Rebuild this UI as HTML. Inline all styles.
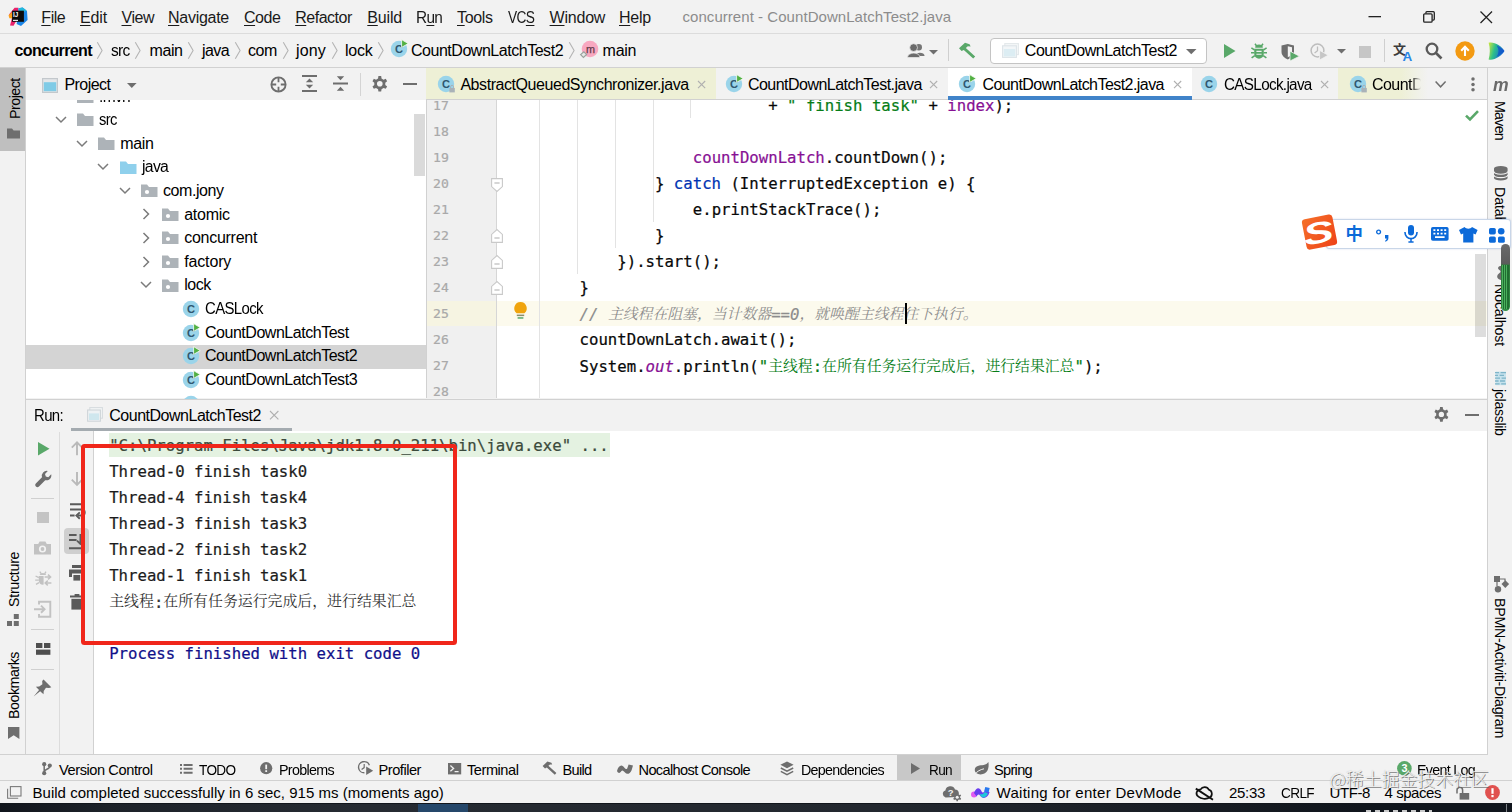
<!DOCTYPE html>
<html lang="en">
<head>
<meta charset="utf-8">
<title>concurrent - CountDownLatchTest2.java</title>
<style>
*{box-sizing:border-box;margin:0;padding:0}
html,body{width:1512px;height:812px;overflow:hidden;background:#f2f2f2}
body{position:relative;font-family:"Liberation Sans","Noto Sans CJK SC",sans-serif;font-size:16px;color:#000}
.abs{position:absolute}
.t{position:absolute;white-space:nowrap;line-height:20px;height:20px;font-size:16px}
.mono{font-family:"DejaVu Sans Mono","Liberation Mono","Noto Serif CJK SC",monospace;-webkit-text-stroke:0.22px currentColor}
.cjk{font-family:"Noto Serif CJK SC","Liberation Serif",serif}
.cjks{font-family:"Noto Sans CJK SC","Liberation Sans",sans-serif}
svg{position:absolute;overflow:visible}
u{text-decoration:underline;text-underline-offset:2px;text-decoration-thickness:1px}
#menubar{left:0;top:0;width:1512px;height:34px;background:#f2f2f2;border-bottom:1px solid #dcdcdc}
#navbar{left:0;top:34px;width:1512px;height:34px;background:#f2f2f2;border-bottom:1px solid #d1d1d1}
#leftstrip{left:0;top:68px;width:26px;height:687px;background:#f2f2f2;border-right:1px solid #d1d1d1}
#rightstrip{left:1487px;top:68px;width:25px;height:687px;background:#f2f2f2;border-left:1px solid #d1d1d1}
#projhead{left:26px;top:68px;width:400px;height:32px;background:#f2f2f2}
#projtree{left:26px;top:98px;width:400px;height:300px;background:#fff;overflow:hidden}
#tabs{left:426px;top:68px;width:1061px;height:32px;background:#f2f2f2;border-bottom:1px solid #d1d1d1;border-left:1px solid #d1d1d1;overflow:hidden}
#editor{left:426px;top:100px;width:1061px;height:298px;background:#fff;overflow:hidden;border-left:1px solid #d1d1d1}
#runhead{left:26px;top:398.5px;width:1461px;height:33.5px;background:#f2f2f2;border-top:1px solid #d1d1d1}
#runleft{left:26px;top:432px;width:68px;height:323px;background:#f2f2f2}
#console{left:93px;top:431px;width:1394px;height:324px;background:#fff;border-left:1px solid #d1d1d1;overflow:hidden}
#toolbar{left:0;top:754px;width:1512px;height:27px;background:#f2f2f2;border-top:1px solid #d1d1d1}
#status{left:0;top:780px;width:1512px;height:23px;background:#f2f2f2;border-top:1px solid #d1d1d1}
#taskbar{left:0;top:803px;width:1512px;height:9px;background:linear-gradient(90deg,#11151c 0,#1d2229 7%,#262b32 24%,#23282f 58%,#181d24 78%,#10151c 90%,#10151c 100%);border-top:1px solid #12161c}
</style>
</head>
<body>
<div class="abs" id="projtree"></div>
<div class="abs" style="left:26px;top:345px;width:400px;height:23.5px;background:#d4d4d4"></div>
<svg style="left:77px;top:89.80000000000001px" width="17" height="13" viewBox="0 0 17 13" ><path d="M0 0.5 H6 L8 3 H16.5 V13 H0 Z" fill="#adb3b8"/></svg>
<span class="t" style="left:99.0px;top:86.6px;letter-spacing:-0.70px;transform-origin:0 50%;transform:scaleX(0.973);">.mvn</span>
<svg style="left:54.6px;top:114.0px" width="12" height="12" viewBox="0 0 12 12" ><path d="M1 3 L6 8 L11 3" fill="none" stroke="#7b7b7b" stroke-width="1.5"/></svg>
<svg style="left:77.0px;top:113.4px" width="17" height="13" viewBox="0 0 17 13" ><path d="M0 0.5 H6 L8 3 H16.5 V13 H0 Z" fill="#adb3b8"/></svg>
<span class="t" style="left:99.0px;top:110.2px;letter-spacing:-0.70px;transform-origin:0 50%;transform:scaleX(0.921);">src</span>
<svg style="left:75.9px;top:137.6px" width="12" height="12" viewBox="0 0 12 12" ><path d="M1 3 L6 8 L11 3" fill="none" stroke="#7b7b7b" stroke-width="1.5"/></svg>
<svg style="left:98.3px;top:137.0px" width="17" height="13" viewBox="0 0 17 13" ><path d="M0 0.5 H6 L8 3 H16.5 V13 H0 Z" fill="#adb3b8"/></svg>
<span class="t" style="left:120.3px;top:133.8px;letter-spacing:-0.37px;">main</span>
<svg style="left:97.2px;top:161.2px" width="12" height="12" viewBox="0 0 12 12" ><path d="M1 3 L6 8 L11 3" fill="none" stroke="#7b7b7b" stroke-width="1.5"/></svg>
<svg style="left:119.6px;top:160.6px" width="17" height="13" viewBox="0 0 17 13" ><path d="M0 0.5 H6 L8 3 H16.5 V13 H0 Z" fill="#8fd0ec"/></svg>
<span class="t" style="left:141.6px;top:157.4px;letter-spacing:-0.70px;transform-origin:0 50%;transform:scaleX(0.986);">java</span>
<svg style="left:118.5px;top:184.8px" width="12" height="12" viewBox="0 0 12 12" ><path d="M1 3 L6 8 L11 3" fill="none" stroke="#7b7b7b" stroke-width="1.5"/></svg>
<svg style="left:140.9px;top:184.20000000000002px" width="17" height="13" viewBox="0 0 17 13" ><path d="M0 0.5 H6 L8 3 H16.5 V13 H0 Z" fill="#adb3b8"/><circle cx="6" cy="8" r="2.1" fill="#fff"/></svg>
<span class="t" style="left:162.9px;top:181.0px;letter-spacing:-0.40px;">com.jony</span>
<svg style="left:139.8px;top:208.4px" width="12" height="12" viewBox="0 0 12 12" ><path d="M3.5 1 L8.5 6 L3.5 11" fill="none" stroke="#7b7b7b" stroke-width="1.5"/></svg>
<svg style="left:162.2px;top:207.8px" width="17" height="13" viewBox="0 0 17 13" ><path d="M0 0.5 H6 L8 3 H16.5 V13 H0 Z" fill="#adb3b8"/><circle cx="6" cy="8" r="2.1" fill="#fff"/></svg>
<span class="t" style="left:184.2px;top:204.6px;letter-spacing:-0.24px;">atomic</span>
<svg style="left:139.8px;top:232.0px" width="12" height="12" viewBox="0 0 12 12" ><path d="M3.5 1 L8.5 6 L3.5 11" fill="none" stroke="#7b7b7b" stroke-width="1.5"/></svg>
<svg style="left:162.2px;top:231.4px" width="17" height="13" viewBox="0 0 17 13" ><path d="M0 0.5 H6 L8 3 H16.5 V13 H0 Z" fill="#adb3b8"/><circle cx="6" cy="8" r="2.1" fill="#fff"/></svg>
<span class="t" style="left:184.2px;top:228.2px;letter-spacing:-0.27px;">concurrent</span>
<svg style="left:139.8px;top:255.60000000000002px" width="12" height="12" viewBox="0 0 12 12" ><path d="M3.5 1 L8.5 6 L3.5 11" fill="none" stroke="#7b7b7b" stroke-width="1.5"/></svg>
<svg style="left:162.2px;top:255.00000000000003px" width="17" height="13" viewBox="0 0 17 13" ><path d="M0 0.5 H6 L8 3 H16.5 V13 H0 Z" fill="#adb3b8"/><circle cx="6" cy="8" r="2.1" fill="#fff"/></svg>
<span class="t" style="left:184.2px;top:251.8px;letter-spacing:-0.15px;">factory</span>
<svg style="left:139.8px;top:279.20000000000005px" width="12" height="12" viewBox="0 0 12 12" ><path d="M1 3 L6 8 L11 3" fill="none" stroke="#7b7b7b" stroke-width="1.5"/></svg>
<svg style="left:162.2px;top:278.6px" width="17" height="13" viewBox="0 0 17 13" ><path d="M0 0.5 H6 L8 3 H16.5 V13 H0 Z" fill="#adb3b8"/><circle cx="6" cy="8" r="2.1" fill="#fff"/></svg>
<span class="t" style="left:184.2px;top:275.4px;letter-spacing:-0.44px;">lock</span>
<svg style="left:181.3px;top:299.2px" width="20" height="20" viewBox="0 0 20 20" ><circle cx="10" cy="10" r="8.2" fill="#9ad4ea"/><text x="10" y="14" text-anchor="middle" font-family="Liberation Sans,sans-serif" font-size="11.2" font-weight="bold" fill="#2f5871">C</text></svg>
<span class="t" style="left:205.0px;top:299.0px;letter-spacing:-0.70px;transform-origin:0 50%;transform:scaleX(0.935);">CASLock</span>
<svg style="left:181.3px;top:322.79999999999995px" width="20" height="20" viewBox="0 0 20 20" ><circle cx="10" cy="10" r="8.2" fill="#9ad4ea"/><text x="10" y="14" text-anchor="middle" font-family="Liberation Sans,sans-serif" font-size="11.2" font-weight="bold" fill="#2f5871">C</text><path d="M12.6 0.6 L19.2 4.6 L12.6 8.4 Z" fill="#52b043" stroke="#fff" stroke-opacity="0.85" stroke-width="0.9"/></svg>
<span class="t" style="left:205.0px;top:322.6px;letter-spacing:-0.47px;">CountDownLatchTest</span>
<svg style="left:181.3px;top:346.4px" width="20" height="20" viewBox="0 0 20 20" ><circle cx="10" cy="10" r="8.2" fill="#9ad4ea"/><text x="10" y="14" text-anchor="middle" font-family="Liberation Sans,sans-serif" font-size="11.2" font-weight="bold" fill="#2f5871">C</text><path d="M12.6 0.6 L19.2 4.6 L12.6 8.4 Z" fill="#52b043" stroke="#fff" stroke-opacity="0.85" stroke-width="0.9"/></svg>
<span class="t" style="left:205.0px;top:346.2px;letter-spacing:-0.47px;">CountDownLatchTest2</span>
<svg style="left:181.3px;top:370.0px" width="20" height="20" viewBox="0 0 20 20" ><circle cx="10" cy="10" r="8.2" fill="#9ad4ea"/><text x="10" y="14" text-anchor="middle" font-family="Liberation Sans,sans-serif" font-size="11.2" font-weight="bold" fill="#2f5871">C</text><path d="M12.6 0.6 L19.2 4.6 L12.6 8.4 Z" fill="#52b043" stroke="#fff" stroke-opacity="0.85" stroke-width="0.9"/></svg>
<span class="t" style="left:205.0px;top:369.8px;letter-spacing:-0.47px;">CountDownLatchTest3</span>
<svg style="left:181.3px;top:393.6px" width="20" height="20" viewBox="0 0 20 20" ><circle cx="10" cy="10" r="8.2" fill="#9ad4ea"/><text x="10" y="14" text-anchor="middle" font-family="Liberation Sans,sans-serif" font-size="11.2" font-weight="bold" fill="#2f5871">C</text></svg>
<div class="abs" style="left:414px;top:114px;width:11px;height:62px;background:#dadada"></div>
<div class="abs" id="editor"></div>
<div class="abs" style="left:427px;top:100px;width:69.5px;height:298px;background:#f0f0f0"></div>
<div class="abs" style="left:427px;top:300.5px;width:1060px;height:25px;background:#fcfaed"></div>
<div class="abs" style="left:427px;top:300.5px;width:69.5px;height:25px;background:#f6f4e2"></div>
<div class="abs" style="left:496px;top:100px;width:1px;height:298px;background:#d6d6d6"></div>
<div class="abs" style="left:539px;top:100px;width:1px;height:298px;background:#e3e3e3"></div>
<div class="abs" style="left:577px;top:100px;width:1px;height:174px;background:#e3e3e3"></div>
<div class="abs" style="left:615px;top:100px;width:1px;height:148px;background:#e3e3e3"></div>
<div class="abs" style="left:652.5px;top:100px;width:1px;height:122px;background:#e3e3e3"></div>
<div class="abs" style="left:690px;top:100px;width:1px;height:18px;background:#e3e3e3"></div>
<span class="t mono" style="left:433.0px;top:96.3px;font-size:13.1px;color:#a9a9a9;">17</span>
<span class="t mono" style="left:433.0px;top:122.3px;font-size:13.1px;color:#a9a9a9;">18</span>
<span class="t mono" style="left:433.0px;top:148.3px;font-size:13.1px;color:#a9a9a9;">19</span>
<span class="t mono" style="left:433.0px;top:174.3px;font-size:13.1px;color:#a9a9a9;">20</span>
<span class="t mono" style="left:433.0px;top:200.3px;font-size:13.1px;color:#a9a9a9;">21</span>
<span class="t mono" style="left:433.0px;top:226.3px;font-size:13.1px;color:#a9a9a9;">22</span>
<span class="t mono" style="left:433.0px;top:252.3px;font-size:13.1px;color:#a9a9a9;">23</span>
<span class="t mono" style="left:433.0px;top:278.3px;font-size:13.1px;color:#a9a9a9;">24</span>
<span class="t mono" style="left:433.0px;top:304.3px;font-size:13.1px;color:#a9a9a9;">25</span>
<span class="t mono" style="left:433.0px;top:330.3px;font-size:13.1px;color:#a9a9a9;">26</span>
<span class="t mono" style="left:433.0px;top:356.3px;font-size:13.1px;color:#a9a9a9;">27</span>
<span class="t mono" style="left:433.0px;top:382.3px;font-size:13.1px;color:#a9a9a9;">28</span>
<svg style="left:491px;top:178.4px" width="12" height="14" viewBox="0 0 12 14" ><path d="M0.6 0.6 H11.4 V8.6 L6 13.4 L0.6 8.6 Z" fill="#fff" stroke="#c9c9c9" stroke-width="1.1"/><path d="M3.4 5 H8.6" stroke="#b5b5b5" stroke-width="1.1"/></svg>
<svg style="left:491px;top:228.60000000000002px" width="12" height="14" viewBox="0 0 12 14" ><path d="M0.6 13.4 H11.4 V5.4 L6 0.6 L0.6 5.4 Z" fill="#fff" stroke="#c9c9c9" stroke-width="1.1"/><path d="M3.4 9 H8.6" stroke="#b5b5b5" stroke-width="1.1"/></svg>
<svg style="left:491px;top:254.60000000000002px" width="12" height="14" viewBox="0 0 12 14" ><path d="M0.6 13.4 H11.4 V5.4 L6 0.6 L0.6 5.4 Z" fill="#fff" stroke="#c9c9c9" stroke-width="1.1"/><path d="M3.4 9 H8.6" stroke="#b5b5b5" stroke-width="1.1"/></svg>
<svg style="left:491px;top:280.6px" width="12" height="14" viewBox="0 0 12 14" ><path d="M0.6 13.4 H11.4 V5.4 L6 0.6 L0.6 5.4 Z" fill="#fff" stroke="#c9c9c9" stroke-width="1.1"/><path d="M3.4 9 H8.6" stroke="#b5b5b5" stroke-width="1.1"/></svg>
<svg style="left:513.5px;top:301.5px" width="13" height="17" viewBox="0 0 13 17" ><path d="M6.5 0 A6.3 6.3 0 0 1 10.4 11.2 H2.6 A6.3 6.3 0 0 1 6.5 0 Z" fill="#f0a40e"/><rect x="2.8" y="12.6" width="7.4" height="1.5" fill="#8d8d6a"/><rect x="3.6" y="15.2" width="5.8" height="1.5" fill="#59a869"/></svg>
<span class="t mono" style="left:768.2px;top:95.9px;font-size:15.66px;color:#080808;">+ <span style="color:#067d17">" finish task"</span> + <span style="color:#871094">index</span>);</span>
<span class="t mono" style="left:692.8px;top:147.9px;font-size:15.66px;color:#080808;"><span style="color:#871094">countDownLatch</span>.countDown();</span>
<span class="t mono" style="left:655.0px;top:173.9px;font-size:15.66px;color:#080808;">} <span style="color:#0033b3">catch</span> (InterruptedException e) {</span>
<span class="t mono" style="left:692.8px;top:199.9px;font-size:15.66px;color:#080808;">e.printStackTrace();</span>
<span class="t mono" style="left:655.0px;top:225.9px;font-size:15.66px;color:#080808;">}</span>
<span class="t mono" style="left:617.3px;top:251.9px;font-size:15.66px;color:#080808;">}).start();</span>
<span class="t mono" style="left:579.6px;top:277.9px;font-size:15.66px;color:#080808;">}</span>
<span class="t mono" style="left:579.6px;top:303.9px;font-size:15.66px;color:#080808;"><span style="color:#8c8c8c;font-style:italic">// <span style="font-family:'Noto Serif CJK SC',serif;font-size:14.85px;-webkit-text-stroke:0;position:relative;top:-1px">主线程在阻塞，当计数器</span>==0<span style="font-family:'Noto Serif CJK SC',serif;font-size:14.85px;-webkit-text-stroke:0;position:relative;top:-1px">，就唤醒主线程往下执行。</span></span></span>
<span class="t mono" style="left:579.6px;top:329.9px;font-size:15.66px;color:#080808;">countDownLatch.await();</span>
<span class="t mono" style="left:579.6px;top:355.9px;font-size:15.66px;color:#080808;">System.<span style="color:#871094;font-style:italic">out</span>.println(<span style="color:#067d17">"<span style="font-family:'Noto Serif CJK SC',serif;font-size:14.85px;-webkit-text-stroke:0;position:relative;top:-1px">主线程</span>:<span style="font-family:'Noto Serif CJK SC',serif;font-size:14.85px;-webkit-text-stroke:0;position:relative;top:-1px">在所有任务运行完成后，进行结果汇总</span>"</span>);</span>
<div class="abs" style="left:904.5px;top:303px;width:2px;height:20.5px;background:#000"></div>
<svg style="left:1465px;top:110px" width="14" height="11" viewBox="0 0 14 11" ><path d="M1 5.6 L5 9.4 L13 1.2" fill="none" stroke="#59a869" stroke-width="2.6"/></svg>
<div class="abs" style="left:1475.3px;top:253.5px;width:10.6px;height:83px;background:rgba(0,0,0,0.135)"></div>
<div class="abs" id="menubar"></div>
<div class="abs" id="navbar"></div>
<svg style="left:7px;top:5px" width="22" height="22" viewBox="0 0 22 22" ><path d="M2 9.6 L7.6 2.8 L11.4 2.8 L11.4 12 L6.6 20.8 L3 20.4 L5 13 Z" fill="#e8226b"/><path d="M1.5 10.2 L5.6 6.4 L6 13.6 L2.4 13.2 Z" fill="#fba01c"/><path d="M11.6 3.2 L15.6 2.6 L20 6 L20.6 15 L14 21 L9.6 19 L11 12 Z" fill="#1b86e8"/><path d="M11.6 3.2 L15.6 2.6 L19.6 5.6 L17 7 L12 6 Z" fill="#22b8dc"/><rect x="5.1" y="5.7" width="11.8" height="11.1" fill="#0c0c0c"/><text x="6" y="11.6" font-family="Liberation Sans,sans-serif" font-weight="bold" font-size="6.3" fill="#fff">IJ</text><rect x="6" y="14.8" width="5" height="1.1" fill="#fff"/></svg>
<span class="t" style="left:41.3px;top:7.5px;color:#1a1a1a;letter-spacing:-0.45px;"><u>F</u>ile</span>
<span class="t" style="left:80.0px;top:7.5px;color:#1a1a1a;letter-spacing:-0.14px;"><u>E</u>dit</span>
<span class="t" style="left:121.5px;top:7.5px;color:#1a1a1a;letter-spacing:-0.43px;"><u>V</u>iew</span>
<span class="t" style="left:168.0px;top:7.5px;color:#1a1a1a;letter-spacing:-0.27px;"><u>N</u>avigate</span>
<span class="t" style="left:244.0px;top:7.5px;color:#1a1a1a;letter-spacing:-0.47px;"><u>C</u>ode</span>
<span class="t" style="left:295.2px;top:7.5px;color:#1a1a1a;letter-spacing:-0.49px;"><u>R</u>efactor</span>
<span class="t" style="left:367.3px;top:7.5px;color:#1a1a1a;letter-spacing:-0.18px;"><u>B</u>uild</span>
<span class="t" style="left:416.3px;top:7.5px;color:#1a1a1a;letter-spacing:-0.70px;transform-origin:0 50%;transform:scaleX(0.961);">R<u>u</u>n</span>
<span class="t" style="left:457.0px;top:7.5px;color:#1a1a1a;letter-spacing:-0.33px;"><u>T</u>ools</span>
<span class="t" style="left:508.3px;top:7.5px;color:#1a1a1a;letter-spacing:-0.70px;transform-origin:0 50%;transform:scaleX(0.857);">VC<u>S</u></span>
<span class="t" style="left:549.6px;top:7.5px;color:#1a1a1a;letter-spacing:-0.22px;"><u>W</u>indow</span>
<span class="t" style="left:619.0px;top:7.5px;color:#1a1a1a;letter-spacing:-0.28px;"><u>H</u>elp</span>
<span class="t" style="left:682.5px;top:6.6px;font-size:15px;color:#8c8c8c;letter-spacing:0.05px;">concurrent - CountDownLatchTest2.java</span>
<svg style="left:1368px;top:16px" width="14" height="2" viewBox="0 0 14 2" ><rect x="0.5" y="0" width="12.5" height="1.3" fill="#222"/></svg>
<svg style="left:1423.4px;top:10.6px" width="12" height="12" viewBox="0 0 12 12" ><rect x="0.7" y="2.8" width="8.4" height="8.4" rx="1" fill="none" stroke="#222" stroke-width="1.3"/><path d="M2.9 2.6 V1.7 A1 1 0 0 1 3.9 0.7 H10.3 A1 1 0 0 1 11.3 1.7 V8.1 A1 1 0 0 1 10.3 9.1 H9.3" fill="none" stroke="#222" stroke-width="1.3"/></svg>
<svg style="left:1479.5px;top:10.5px" width="12.5" height="12.5" viewBox="0 0 12.5 12.5" ><path d="M0.5 0.5 L12 12 M12 0.5 L0.5 12" stroke="#222" stroke-width="1.3" fill="none"/></svg>
<span class="t" style="left:14.5px;top:40.5px;font-weight:bold;letter-spacing:-0.61px;">concurrent</span>
<span class="t" style="left:111.0px;top:40.5px;letter-spacing:-0.70px;transform-origin:0 50%;transform:scaleX(0.967);">src</span>
<span class="t" style="left:149.5px;top:40.5px;letter-spacing:-0.42px;">main</span>
<span class="t" style="left:202.0px;top:40.5px;letter-spacing:-0.59px;">java</span>
<span class="t" style="left:248.0px;top:40.5px;letter-spacing:-0.41px;">com</span>
<span class="t" style="left:296.0px;top:40.5px;letter-spacing:0.16px;">jony</span>
<span class="t" style="left:345.0px;top:40.5px;letter-spacing:-0.24px;">lock</span>
<svg style="left:96.7px;top:41.9px" width="5.6" height="17" viewBox="0 0 5.6 17" ><path d="M0.3 0.3 L5.1 8.5 L0.3 16.7" fill="none" stroke="#b4b4b4" stroke-width="1.1"/></svg>
<svg style="left:134.5px;top:41.9px" width="5.6" height="17" viewBox="0 0 5.6 17" ><path d="M0.3 0.3 L5.1 8.5 L0.3 16.7" fill="none" stroke="#b4b4b4" stroke-width="1.1"/></svg>
<svg style="left:188.2px;top:41.9px" width="5.6" height="17" viewBox="0 0 5.6 17" ><path d="M0.3 0.3 L5.1 8.5 L0.3 16.7" fill="none" stroke="#b4b4b4" stroke-width="1.1"/></svg>
<svg style="left:234.5px;top:41.9px" width="5.6" height="17" viewBox="0 0 5.6 17" ><path d="M0.3 0.3 L5.1 8.5 L0.3 16.7" fill="none" stroke="#b4b4b4" stroke-width="1.1"/></svg>
<svg style="left:283.2px;top:41.9px" width="5.6" height="17" viewBox="0 0 5.6 17" ><path d="M0.3 0.3 L5.1 8.5 L0.3 16.7" fill="none" stroke="#b4b4b4" stroke-width="1.1"/></svg>
<svg style="left:332.2px;top:41.9px" width="5.6" height="17" viewBox="0 0 5.6 17" ><path d="M0.3 0.3 L5.1 8.5 L0.3 16.7" fill="none" stroke="#b4b4b4" stroke-width="1.1"/></svg>
<svg style="left:378.2px;top:41.9px" width="5.6" height="17" viewBox="0 0 5.6 17" ><path d="M0.3 0.3 L5.1 8.5 L0.3 16.7" fill="none" stroke="#b4b4b4" stroke-width="1.1"/></svg>
<svg style="left:569.2px;top:41.9px" width="5.6" height="17" viewBox="0 0 5.6 17" ><path d="M0.3 0.3 L5.1 8.5 L0.3 16.7" fill="none" stroke="#b4b4b4" stroke-width="1.1"/></svg>
<svg style="left:388.5px;top:39.4px" width="20" height="20" viewBox="0 0 20 20" ><circle cx="10" cy="10" r="8.2" fill="#9ad4ea"/><text x="10" y="14" text-anchor="middle" font-family="Liberation Sans,sans-serif" font-size="11.2" font-weight="bold" fill="#2f5871">C</text><path d="M12.6 0.6 L19.2 4.6 L12.6 8.4 Z" fill="#52b043" stroke="#fff" stroke-opacity="0.85" stroke-width="0.9"/></svg>
<span class="t" style="left:411.0px;top:40.5px;letter-spacing:-0.47px;">CountDownLatchTest2</span>
<svg style="left:578.9px;top:39.4px" width="22" height="20" viewBox="0 0 22 20" ><circle cx="11" cy="10" r="8.3" fill="#f8a8c0"/><text x="11.6" y="13.9" text-anchor="middle" font-family="Liberation Sans,sans-serif" font-size="10.8" fill="#5f3b48" stroke="#5f3b48" stroke-width="0.25">m</text><path d="M1.6 15.6 L4.8 12.8 L7.6 15.4 L4.4 18.4 Z" fill="#e6e9e7" stroke="#9aa39e" stroke-width="1.2"/></svg>
<span class="t" style="left:602.6px;top:40.5px;letter-spacing:-0.27px;">main</span>
<svg style="left:907px;top:43px" width="18" height="15" viewBox="0 0 18 15" ><circle cx="11.8" cy="4.2" r="3.2" fill="#757575"/><path d="M8 13 C9 8.6 17.4 9 17.6 13 Z" fill="#757575"/><circle cx="6.6" cy="4.6" r="3.9" fill="#6b6b6b" stroke="#f2f2f2" stroke-width="0.7"/><path d="M0.4 14.6 C0.6 8.6 12.8 8.6 13 14.6 Z" fill="#6b6b6b" stroke="#f2f2f2" stroke-width="0.7"/></svg>
<svg style="left:929px;top:49.5px" width="9" height="4.5" viewBox="0 0 9 4.5" ><path d="M0 0 H9 L4.5 4.5 Z" fill="#6e6e6e"/></svg>
<div class="abs" style="left:948px;top:39px;width:1px;height:22px;background:#cfcfcf"></div>
<svg style="left:958px;top:42px" width="18" height="17" viewBox="0 0 18 17" ><path d="M1 6.2 L7 0.8 L11.6 2.2 L12.6 4.4 L9.8 4.2 L7.8 6 L17.2 14.6 L15.2 16.6 L5.8 8 L3.6 9 Z" fill="#59a869"/></svg>
<div class="abs" style="left:990px;top:38px;width:217px;height:26px;background:#fff;border:1px solid #c4c4c4;border-radius:4px"></div>
<svg style="left:1002px;top:43px" width="17" height="15" viewBox="0 0 17 15" ><rect x="2.8" y="0.6" width="13.6" height="11" fill="#f6f8f9" stroke="#e3e8eb" stroke-width="1.1"/><rect x="0.6" y="2.8" width="13.8" height="11.6" fill="#f3f6f8" stroke="#dde4e8" stroke-width="1.1"/><rect x="1.8" y="6" width="11.4" height="7.4" fill="#dcedf3"/></svg>
<span class="t" style="left:1024.8px;top:41.3px;letter-spacing:-0.47px;">CountDownLatchTest2</span>
<svg style="left:1186px;top:48.6px" width="10.5" height="5.2" viewBox="0 0 10.5 5.2" ><path d="M0 0 H10.5 L5.25 5.2 Z" fill="#6e6e6e"/></svg>
<svg style="left:1224px;top:44px" width="12" height="14" viewBox="0 0 12 14" ><path d="M0 0 L11.5 7 L0 14 Z" fill="#59a869"/></svg>
<svg style="left:1251px;top:43px" width="16" height="16" viewBox="0 0 16 16" ><path d="M4 0.8 L5.8 3.2 M12 0.8 L10.2 3.2" stroke="#59a869" stroke-width="1.5" fill="none"/><path d="M4.2 4.8 A3.8 3.2 0 0 1 11.8 4.8 Z" fill="#59a869"/><path d="M3.2 5.8 H12.8 V10.8 A4.8 5 0 0 1 3.2 10.8 Z" fill="#59a869"/><path d="M0.4 4.8 L3.4 6.8 M15.6 4.8 L12.6 6.8 M0 9.8 H3.4 M16 9.8 H12.6 M0.6 14.8 L3.8 12.6 M15.4 14.8 L12.2 12.6" stroke="#59a869" stroke-width="1.6" fill="none"/><path d="M5.4 8.4 H10.6 M5.4 11.2 H10.6" stroke="#f2f2f2" stroke-width="1.1"/></svg>
<svg style="left:1281px;top:43.5px" width="19" height="17" viewBox="0 0 19 17" ><path d="M0.5 1.5 L6.8 0 L13 1.5 V8 C13 12 9 14.5 6.8 15.5 C4.5 14.5 0.5 12 0.5 8 Z" fill="#6e6e6e"/><path d="M6.8 2.2 L11 3.2 V8 C11 10.5 8.6 12.4 6.8 13.3 Z" fill="#f2f2f2"/><path d="M9 7.2 L18.5 12.2 L9 17 Z" fill="#59a869" stroke="#f2f2f2" stroke-width="0.8"/></svg>
<svg style="left:1310px;top:43px" width="19" height="17" viewBox="0 0 19 17" ><circle cx="7.5" cy="7.5" r="6.4" fill="none" stroke="#bdbdbd" stroke-width="1.5"/><path d="M7.5 3.6 V7.8 L4.6 10" fill="none" stroke="#bdbdbd" stroke-width="1.3"/><path d="M9.6 7.4 L18.2 12.2 L9.6 17 Z" fill="#c6c6c6" stroke="#f2f2f2" stroke-width="0.8"/></svg>
<svg style="left:1336.6px;top:49.2px" width="9" height="4.5" viewBox="0 0 9 4.5" ><path d="M0 0 H9 L4.5 4.5 Z" fill="#6e6e6e"/></svg>
<div class="abs" style="left:1359px;top:45.5px;width:12px;height:12px;background:#c6c6c6"></div>
<div class="abs" style="left:1384px;top:39px;width:1px;height:23px;background:#cfcfcf"></div>
<svg style="left:1393px;top:41px" width="22" height="22" viewBox="0 0 22 22" ><text x="0" y="13" font-family="Noto Sans CJK SC,sans-serif" font-size="13" font-weight="bold" fill="#3c3c3c">文</text><text x="9.4" y="20.2" font-family="Liberation Sans,sans-serif" font-size="13.5" font-weight="bold" fill="#2b86e6">A</text></svg>
<svg style="left:1425px;top:42px" width="18" height="18" viewBox="0 0 18 18" ><circle cx="7" cy="7" r="5.3" fill="none" stroke="#5a5a5a" stroke-width="2.3"/><path d="M11 11 L16.5 16.5" stroke="#5a5a5a" stroke-width="2.6" fill="none"/></svg>
<svg style="left:1455px;top:41px" width="20" height="20" viewBox="0 0 20 20" ><circle cx="10" cy="10" r="9.7" fill="#f39a12"/><path d="M10 15 V6.6 M6.2 9.8 L10 5.8 L13.8 9.8" fill="none" stroke="#fff" stroke-width="2.1"/></svg>
<svg style="left:1488px;top:42px" width="17" height="18" viewBox="0 0 17 18" ><defs><linearGradient id="cg" x1="0" y1="0" x2="1" y2="0.3"><stop offset="0" stop-color="#d2e83a"/><stop offset="0.45" stop-color="#2cc08a"/><stop offset="1" stop-color="#1668d8"/></linearGradient></defs><path d="M0.6 0.8 C6 -0.6 13.6 4 16.4 9 C13.6 14 6 18.8 0.6 17.4 C2.2 12 2.2 6 0.6 0.8 Z" fill="url(#cg)"/><path d="M8.6 3.2 C12 5 14.6 7 16.4 9 C14.6 11.2 12 13.2 8.6 14.8 C11.2 11 11.2 7 8.6 3.2 Z" fill="#1257c8" fill-opacity=".85"/></svg>
<div class="abs" id="projhead"></div>
<div class="abs" id="leftstrip"></div>
<svg style="left:41.5px;top:77.5px" width="16" height="15" viewBox="0 0 16 15" ><rect x="0.6" y="0.6" width="14.8" height="13.8" fill="#e4e7e9" stroke="#c3c8cc" stroke-width="1.2"/><rect x="1.8" y="4.2" width="12.4" height="9" fill="#7fcbe6"/></svg>
<span class="t" style="left:64.4px;top:74.8px;letter-spacing:-0.54px;">Project</span>
<svg style="left:127px;top:83px" width="9.6" height="5" viewBox="0 0 9.6 5" ><path d="M0 0 H9.6 L4.8 5 Z" fill="#6e6e6e"/></svg>
<svg style="left:270.3px;top:75.6px" width="17" height="17" viewBox="0 0 17 17" ><circle cx="8.5" cy="8.5" r="7.1" fill="none" stroke="#6e6e6e" stroke-width="1.9"/><path d="M8.5 1.5 V6.2 M8.5 10.8 V15.5 M1.5 8.5 H6.2 M10.8 8.5 H15.5" stroke="#6e6e6e" stroke-width="1.8"/></svg>
<svg style="left:302px;top:75.4px" width="15" height="17" viewBox="0 0 15 17" ><path d="M0 1 H15 M0 16 H15" stroke="#6e6e6e" stroke-width="2"/><path d="M3.8 7.2 L7.5 3.6 L11.2 7.2 Z M3.8 9.8 L7.5 13.4 L11.2 9.8 Z" fill="#6e6e6e"/></svg>
<svg style="left:332.5px;top:75.4px" width="15" height="17" viewBox="0 0 15 17" ><path d="M0 8.5 H15" stroke="#6e6e6e" stroke-width="2"/><path d="M3.8 1.2 L7.5 5.2 L11.2 1.2 Z M3.8 15.8 L7.5 11.8 L11.2 15.8 Z" fill="#6e6e6e"/></svg>
<div class="abs" style="left:360px;top:73px;width:1px;height:23px;background:#d4d4d4"></div>
<svg style="left:371.7px;top:76.0px" width="15.6" height="15.6" viewBox="0 0 15.6 15.6" ><path d="M9.18 15.48 L6.42 15.48 L6.06 13.14 L4.04 11.97 L1.84 12.83 L0.46 10.44 L2.31 8.97 L2.31 6.63 L0.46 5.16 L1.84 2.77 L4.04 3.63 L6.06 2.46 L6.42 0.12 L9.18 0.12 L9.54 2.46 L11.56 3.63 L13.76 2.77 L15.14 5.16 L13.29 6.63 L13.29 8.97 L15.14 10.44 L13.76 12.83 L11.56 11.97 L9.54 13.14 Z" fill="#6e6e6e"/><circle cx="7.8" cy="7.8" r="2.81" fill="#f2f2f2"/></svg>
<div class="abs" style="left:403px;top:83.2px;width:14px;height:2.2px;background:#6e6e6e"></div>
<div class="abs" style="left:0;top:68px;width:25.4px;height:83px;background:#bfbfbf"></div>
<span class="t" style="left:4.6px;top:119.3px;font-size:14.2px;letter-spacing:-0.48px;transform-origin:0 0;transform:rotate(-90deg);">Project</span>
<svg style="left:7px;top:127.6px" width="13" height="10.4" viewBox="0 0 13 10.4" ><path d="M0 0.4 H5 L6.6 2.4 H13 V10.4 H0 Z" fill="#6e6e6e"/></svg>
<span class="t" style="left:4.4px;top:606.8px;font-size:14.2px;letter-spacing:-0.26px;transform-origin:0 0;transform:rotate(-90deg);">Structure</span>
<svg style="left:7px;top:613.6px" width="12" height="12" viewBox="0 0 12 12" ><rect x="6.8" y="0" width="5" height="5" fill="#6e6e6e"/><rect x="0" y="7" width="5" height="5" fill="#6e6e6e"/><rect x="6.8" y="7" width="5" height="5" fill="#6e6e6e"/></svg>
<span class="t" style="left:4.4px;top:719.2px;font-size:14.2px;letter-spacing:-0.44px;transform-origin:0 0;transform:rotate(-90deg);">Bookmarks</span>
<svg style="left:7.6px;top:727.4px" width="11.4" height="12" viewBox="0 0 11.4 12" ><path d="M0 0 H11.4 V12 L5.7 8.2 L0 12 Z" fill="#6e6e6e"/></svg>
<div class="abs" id="tabs"></div>
<div class="abs" style="left:426px;top:68px;width:289.7px;height:31px;background:#eef0d6"></div>
<div class="abs" style="left:948px;top:68px;width:244px;height:31px;background:#fff"></div>
<div class="abs" style="left:1338px;top:68px;width:90px;height:31px;background:linear-gradient(90deg,#eef0d6 0,#eef0d6 70%,#f2f2f2 100%)"></div>
<div class="abs" style="left:948px;top:96.2px;width:244px;height:4px;background:#4083c9"></div>
<svg style="left:435.9px;top:73.8px" width="20" height="20" viewBox="0 0 20 20" ><circle cx="10" cy="10" r="8.2" fill="#9ad4ea"/><text x="10" y="14" text-anchor="middle" font-family="Liberation Sans,sans-serif" font-size="11.2" font-weight="bold" fill="#2f5871">C</text><rect x="13.4" y="14" width="5.4" height="4.4" fill="#a9b2b8"/><path d="M14.6 14 v-1.2 a1.5 1.5 0 0 1 3 0 V14" fill="none" stroke="#a9b2b8" stroke-width="1"/></svg>
<span class="t" style="left:460.4px;top:74.8px;letter-spacing:-0.44px;">AbstractQueuedSynchronizer.java</span>
<svg style="left:698.4px;top:81.0px" width="7.2" height="7.2" viewBox="0 0 7.2 7.2" ><path d="M0 0 L7.2 7.2 M7.2 0 L0 7.2" stroke="#b0b0b0" stroke-width="1.1" fill="none"/></svg>
<svg style="left:724.1px;top:73.9px" width="20" height="20" viewBox="0 0 20 20" ><circle cx="10" cy="10" r="8.2" fill="#9ad4ea"/><text x="10" y="14" text-anchor="middle" font-family="Liberation Sans,sans-serif" font-size="11.2" font-weight="bold" fill="#2f5871">C</text><path d="M12.6 0.6 L19.2 4.6 L12.6 8.4 Z" fill="#52b043" stroke="#fff" stroke-opacity="0.85" stroke-width="0.9"/></svg>
<span class="t" style="left:747.9px;top:74.8px;letter-spacing:-0.52px;">CountDownLatchTest.java</span>
<svg style="left:930.4px;top:81.0px" width="7.2" height="7.2" viewBox="0 0 7.2 7.2" ><path d="M0 0 L7.2 7.2 M7.2 0 L0 7.2" stroke="#b0b0b0" stroke-width="1.1" fill="none"/></svg>
<svg style="left:956.8px;top:73.9px" width="20" height="20" viewBox="0 0 20 20" ><circle cx="10" cy="10" r="8.2" fill="#9ad4ea"/><text x="10" y="14" text-anchor="middle" font-family="Liberation Sans,sans-serif" font-size="11.2" font-weight="bold" fill="#2f5871">C</text><path d="M12.6 0.6 L19.2 4.6 L12.6 8.4 Z" fill="#52b043" stroke="#fff" stroke-opacity="0.85" stroke-width="0.9"/></svg>
<span class="t" style="left:982.4px;top:74.8px;letter-spacing:-0.55px;">CountDownLatchTest2.java</span>
<svg style="left:1174.0px;top:81.0px" width="7.2" height="7.2" viewBox="0 0 7.2 7.2" ><path d="M0 0 L7.2 7.2 M7.2 0 L0 7.2" stroke="#b0b0b0" stroke-width="1.1" fill="none"/></svg>
<svg style="left:1199.4px;top:73.9px" width="20" height="20" viewBox="0 0 20 20" ><circle cx="10" cy="10" r="8.2" fill="#9ad4ea"/><text x="10" y="14" text-anchor="middle" font-family="Liberation Sans,sans-serif" font-size="11.2" font-weight="bold" fill="#2f5871">C</text></svg>
<span class="t" style="left:1223.8px;top:74.8px;letter-spacing:-0.70px;transform-origin:0 50%;transform:scaleX(0.952);">CASLock.java</span>
<svg style="left:1321.4px;top:81.0px" width="7.2" height="7.2" viewBox="0 0 7.2 7.2" ><path d="M0 0 L7.2 7.2 M7.2 0 L0 7.2" stroke="#b0b0b0" stroke-width="1.1" fill="none"/></svg>
<svg style="left:1348px;top:73.9px" width="20" height="20" viewBox="0 0 20 20" ><circle cx="10" cy="10" r="8.2" fill="#9ad4ea"/><text x="10" y="14" text-anchor="middle" font-family="Liberation Sans,sans-serif" font-size="11.2" font-weight="bold" fill="#2f5871">C</text><rect x="13.4" y="14" width="5.4" height="4.4" fill="#a9b2b8"/><path d="M14.6 14 v-1.2 a1.5 1.5 0 0 1 3 0 V14" fill="none" stroke="#a9b2b8" stroke-width="1"/></svg>
<span class="t" style="left:1372.0px;top:74.8px;letter-spacing:-0.55px;width:48.5px;overflow:hidden;-webkit-mask-image:linear-gradient(90deg,#000 78%,transparent 100%);">CountDownLatchTest3.java</span>
<svg style="left:1434.8px;top:81px" width="11.2" height="7" viewBox="0 0 11.2 7" ><path d="M0.6 0.6 L5.6 5.8 L10.6 0.6" fill="none" stroke="#6e6e6e" stroke-width="1.5"/></svg>
<svg style="left:1471.3px;top:77px" width="4" height="15" viewBox="0 0 4 15" ><circle cx="2" cy="2" r="1.75" fill="#6e6e6e"/><circle cx="2" cy="7.4" r="1.75" fill="#6e6e6e"/><circle cx="2" cy="12.8" r="1.75" fill="#6e6e6e"/></svg>
<div class="abs" id="runhead"></div>
<div class="abs" id="runleft"></div>
<div class="abs" id="console"></div>
<span class="t" style="left:33.6px;top:405.7px;letter-spacing:-0.70px;transform-origin:0 50%;transform:scaleX(0.936);">Run:</span>
<svg style="left:86.5px;top:407.3px" width="16" height="15" viewBox="0 0 16 15" ><rect x="2.8" y="0.6" width="12.6" height="10.6" fill="#f4f6f7" stroke="#d7dcdf" stroke-width="1.1"/><rect x="0.6" y="3" width="12.8" height="11.2" fill="#eef2f4" stroke="#cfd5d9" stroke-width="1.1"/><rect x="2" y="6.4" width="10" height="6.6" fill="#cfe7ee"/></svg>
<span class="t" style="left:109.3px;top:405.7px;letter-spacing:-0.49px;">CountDownLatchTest2</span>
<svg style="left:270.1px;top:410.8px" width="8.4" height="8.4" viewBox="0 0 8.4 8.4" ><path d="M0 0 L8.4 8.4 M8.4 0 L0 8.4" stroke="#b0b0b0" stroke-width="1.1" fill="none"/></svg>
<div class="abs" style="left:71px;top:428px;width:220.5px;height:2.8px;background:#a4abb0"></div>
<svg style="left:1433.6999999999998px;top:407.40000000000003px" width="14.8" height="14.8" viewBox="0 0 14.8 14.8" ><path d="M8.71 14.68 L6.09 14.68 L5.75 12.47 L3.83 11.36 L1.75 12.18 L0.44 9.91 L2.19 8.51 L2.19 6.29 L0.44 4.89 L1.75 2.62 L3.83 3.44 L5.75 2.33 L6.09 0.12 L8.71 0.12 L9.05 2.33 L10.97 3.44 L13.05 2.62 L14.36 4.89 L12.61 6.29 L12.61 8.51 L14.36 9.91 L13.05 12.18 L10.97 11.36 L9.05 12.47 Z" fill="#6e6e6e"/><circle cx="7.4" cy="7.4" r="2.66" fill="#f2f2f2"/></svg>
<div class="abs" style="left:1464.8px;top:413.8px;width:14.2px;height:2.1px;background:#6e6e6e"></div>
<div class="abs" style="left:59px;top:432px;width:1px;height:322px;background:#dcdcdc"></div>
<svg style="left:38px;top:441.5px" width="12" height="13.5" viewBox="0 0 12 13.5" ><path d="M0 0 L11.5 6.7 L0 13.4 Z" fill="#59a869"/></svg>
<svg style="left:34.5px;top:471px" width="17" height="16" viewBox="0 0 17 16" ><path d="M16.2 3.2 A4.9 4.9 0 0 1 10.2 9.2 L4 15.4 A2.1 2.1 0 0 1 0.8 12.4 L7 6.2 A4.9 4.9 0 0 1 12.8 0 L10 2.9 L10.8 5.5 L13.3 6.2 Z" fill="#6e6e6e"/></svg>
<div class="abs" style="left:31px;top:498px;width:23px;height:1px;background:#d0d0d0"></div>
<div class="abs" style="left:37px;top:511.6px;width:11.6px;height:11.6px;background:#c4c4c4"></div>
<svg style="left:34.2px;top:541.4px" width="17" height="14" viewBox="0 0 17 14" ><path d="M0 3 H4.2 L5.6 0.6 H11.4 L12.8 3 H17 V13.6 H0 Z" fill="#c2c2c2"/><circle cx="8.5" cy="8" r="3.6" fill="#f2f2f2"/><circle cx="8.5" cy="8" r="1.9" fill="#c2c2c2"/></svg>
<svg style="left:34.5px;top:571px" width="17" height="16" viewBox="0 0 17 16" ><path d="M4.8 0.6 L6.4 2.8 M11 0.6 L9.6 2.8" stroke="#c2c2c2" stroke-width="1.3"/><path d="M4.6 4 A3.4 2.6 0 0 1 11.2 4 Z" fill="#c2c2c2"/><path d="M3.8 5 H8.6 V13.6 A4.4 4.4 0 0 1 3.8 10 Z" fill="#c2c2c2"/><path d="M0.6 5 L3.8 6.6 M0.2 9.2 H3.8 M1 13.4 L4 11.6" stroke="#c2c2c2" stroke-width="1.3"/><path d="M9.6 6 H15.2 M13 3.6 L15.6 6 L13 8.4 M16.4 12 H10.6 M12.8 9.6 L10.2 12 L12.8 14.4" fill="none" stroke="#c2c2c2" stroke-width="1.5"/></svg>
<svg style="left:34.2px;top:601.4px" width="17" height="16.4" viewBox="0 0 17 16.4" ><path d="M5 3.4 V0.7 H16.3 V15.7 H5 V13" fill="none" stroke="#c2c2c2" stroke-width="1.9"/><path d="M0 8.2 H10.4 M7 4.6 L10.6 8.2 L7 11.8" fill="none" stroke="#c2c2c2" stroke-width="1.9"/></svg>
<div class="abs" style="left:31px;top:628.5px;width:23px;height:1px;background:#d0d0d0"></div>
<svg style="left:35.5px;top:643px" width="14.4" height="11.8" viewBox="0 0 14.4 11.8" ><rect x="0" y="0" width="6.4" height="5" fill="#4f4f4f"/><rect x="8" y="0" width="6.4" height="5" fill="#4f4f4f"/><rect x="0" y="6.6" width="14.4" height="5.2" fill="#4f4f4f"/></svg>
<div class="abs" style="left:31px;top:668.5px;width:23px;height:1px;background:#d0d0d0"></div>
<svg style="left:33.4px;top:679.4px" width="19" height="18" viewBox="0 0 17 16" ><path d="M9.4 0.4 L16.4 7.4 L14.4 8 L11.6 7.8 L9.6 10.6 L9.4 13.6 L6.4 10.8 L0.6 15.6 L5.4 9.8 L2.6 6.8 L5.6 6.6 L8.4 4.6 L8.2 1.8 Z" fill="#6e6e6e"/></svg>
<svg style="left:70.5px;top:441.2px" width="12" height="14.2" viewBox="0 0 12 14.2" ><path d="M6 14.2 V1.4 M0.8 6.6 L6 1.3 L11.2 6.6" fill="none" stroke="#b9b9b9" stroke-width="1.9"/></svg>
<svg style="left:70.5px;top:471.8px" width="12" height="14.2" viewBox="0 0 12 14.2" ><path d="M6 0 V12.8 M0.8 7.6 L6 12.9 L11.2 7.6" fill="none" stroke="#b9b9b9" stroke-width="1.9"/></svg>
<svg style="left:69.6px;top:503px" width="15" height="16" viewBox="0 0 15 16" ><path d="M0 1.2 H15 M0 6.4 H11.6 A3 3 0 0 1 11.6 12.6 H8 M0 12.6 H4.6" fill="none" stroke="#5a5a5a" stroke-width="2"/><path d="M9.8 9.4 L6.4 12.6 L9.8 15.8" fill="none" stroke="#5a5a5a" stroke-width="1.9"/></svg>
<div class="abs" style="left:64px;top:528px;width:25.4px;height:26px;background:#cfcfcf;border-radius:4px"></div>
<svg style="left:69.4px;top:533.6px" width="15" height="15" viewBox="0 0 15 15" ><path d="M0 1 H7.6 M0 6 H7.6 M0 14.2 H15" fill="none" stroke="#5a5a5a" stroke-width="2"/><path d="M11.4 0 V9.6 M8 6.6 L11.4 10 L14.8 6.6" fill="none" stroke="#5a5a5a" stroke-width="1.8"/></svg>
<svg style="left:69px;top:564.6px" width="15.6" height="15.6" viewBox="0 0 15.6 15.6" ><rect x="3" y="0" width="9.6" height="3" fill="#5a5a5a"/><path d="M0 4.4 H15.6 V12 H12.6 V8.6 H3 V12 H0 Z" fill="#5a5a5a"/><rect x="4.4" y="10" width="6.8" height="5.6" fill="#5a5a5a"/></svg>
<svg style="left:70px;top:594.4px" width="14" height="15.6" viewBox="0 0 14 15.6" ><path d="M4.6 0 H9.4 V1.6 H14 V3.4 H0 V1.6 H4.6 Z" fill="#5a5a5a"/><path d="M1.4 4.8 H12.6 V15.6 H1.4 Z" fill="#5a5a5a"/></svg>
<div class="abs" style="left:108.5px;top:432.6px;width:501.5px;height:24.2px;background:#e4f2e1"></div>
<span class="t mono" style="left:109.2px;top:436.0px;font-size:15.66px;color:#3b4a3b;">"C:\Program Files\Java\jdk1.8.0_211\bin\java.exe" ...</span>
<span class="t mono" style="left:109.2px;top:462.0px;font-size:15.66px;color:#1c1c1c;">Thread-0 finish task0</span>
<span class="t mono" style="left:109.2px;top:488.0px;font-size:15.66px;color:#1c1c1c;">Thread-4 finish task4</span>
<span class="t mono" style="left:109.2px;top:514.0px;font-size:15.66px;color:#1c1c1c;">Thread-3 finish task3</span>
<span class="t mono" style="left:109.2px;top:540.0px;font-size:15.66px;color:#1c1c1c;">Thread-2 finish task2</span>
<span class="t mono" style="left:109.2px;top:566.0px;font-size:15.66px;color:#1c1c1c;">Thread-1 finish task1</span>
<span class="t mono" style="left:109.2px;top:592.0px;font-size:15.66px;color:#333;"><span style="font-family:'Noto Serif CJK SC',serif;font-size:14.9px;-webkit-text-stroke:0;position:relative;top:-1.8px">主线程</span>:<span style="font-family:'Noto Serif CJK SC',serif;font-size:14.9px;-webkit-text-stroke:0;position:relative;top:-1.8px">在所有任务运行完成后，进行结果汇总</span></span>
<span class="t mono" style="left:109.2px;top:644.0px;font-size:15.66px;color:#10108a;">Process finished with exit code 0</span>
<div class="abs" style="left:80.5px;top:443.9px;width:376.7px;height:200.8px;border:4.2px solid #f0261a;border-radius:3.5px"></div>
<div class="abs" id="toolbar"></div>
<div class="abs" id="status"></div>
<div class="abs" id="taskbar"></div>
<div class="abs" style="left:897px;top:755px;width:64px;height:25px;background:#c8c8c8"></div>
<svg style="left:41.5px;top:762px" width="10" height="13.4" viewBox="0 0 10 13.4" ><circle cx="2.2" cy="2.2" r="2.1" fill="#6e6e6e"/><circle cx="2.2" cy="11.2" r="2.1" fill="#6e6e6e"/><circle cx="7.8" cy="3.6" r="2.1" fill="#6e6e6e"/><path d="M2.2 2 V11 M7.8 4 C7.8 8 2.2 6.6 2.2 10" fill="none" stroke="#6e6e6e" stroke-width="1.5"/></svg>
<span class="t" style="left:59.0px;top:759.8px;font-size:14.6px;letter-spacing:-0.42px;">Version Control</span>
<svg style="left:180.4px;top:763.6px" width="12.6" height="9.6" viewBox="0 0 12.6 9.6" ><path d="M0 0.9 H2 M3.6 0.9 H12.6 M0 4.8 H2 M3.6 4.8 H12.6 M0 8.7 H2 M3.6 8.7 H12.6" stroke="#6e6e6e" stroke-width="2"/></svg>
<span class="t" style="left:198.5px;top:759.8px;font-size:14.6px;letter-spacing:-0.70px;transform-origin:0 50%;transform:scaleX(0.933);">TODO</span>
<svg style="left:260.4px;top:762px" width="12.4" height="12.4" viewBox="0 0 12.4 12.4" ><circle cx="6.2" cy="6.2" r="6.1" fill="#6e6e6e"/><rect x="5.3" y="2.6" width="1.8" height="4.6" fill="#f2f2f2"/><rect x="5.3" y="8.2" width="1.8" height="1.8" fill="#f2f2f2"/></svg>
<span class="t" style="left:279.0px;top:759.8px;font-size:14.6px;letter-spacing:-0.70px;transform-origin:0 50%;transform:scaleX(0.981);">Problems</span>
<svg style="left:357.6px;top:761.3px" width="15.2" height="14" viewBox="0 0 15.2 14" ><path d="M11.4 4.2 A5.6 5.6 0 1 0 6.4 11.8" fill="none" stroke="#6e6e6e" stroke-width="1.4"/><path d="M6.2 3 V6.6 L3.6 8.4" fill="none" stroke="#6e6e6e" stroke-width="1.2"/><path d="M8.2 5.6 L15.2 9.8 L8.2 14 Z" fill="#6e6e6e"/></svg>
<span class="t" style="left:378.5px;top:759.8px;font-size:14.6px;letter-spacing:-0.47px;">Profiler</span>
<svg style="left:447.5px;top:762.6px" width="13.2" height="11.4" viewBox="0 0 13.2 11.4" ><rect x="0" y="0" width="13.2" height="11.4" fill="#6e6e6e"/><path d="M2.4 2.6 L5.6 5.4 L2.4 8.2 M6.6 8.6 H10.6" fill="none" stroke="#f2f2f2" stroke-width="1.3"/></svg>
<span class="t" style="left:467.0px;top:759.8px;font-size:14.6px;letter-spacing:-0.46px;">Terminal</span>
<svg style="left:542px;top:761.4px" width="15" height="14" viewBox="0 0 15 14" ><path d="M0.6 5 L5.4 0.6 L9.4 1.8 L10.2 3.6 L8 3.4 L6.4 4.8 L14.4 12 L12.8 13.8 L4.8 6.6 L3 7.4 Z" fill="#6e6e6e"/></svg>
<span class="t" style="left:562.5px;top:759.8px;font-size:14.6px;letter-spacing:-0.69px;">Build</span>
<svg style="left:617px;top:763.6px" width="16" height="10.6" viewBox="0 0 16 10.6" ><path d="M0 7 C1 3 3.6 0.4 6 2.2 C7.6 3.4 8.6 6 10.2 4.4 L11.6 0.6 L16 1.6 L14.6 6.2 C13 10 10 10.8 8 8.6 C6.6 7 5.6 5.6 4.4 7 C3.4 8.6 1.6 10.4 0 7 Z" fill="#6e6e6e"/></svg>
<span class="t" style="left:638.5px;top:759.8px;font-size:14.6px;letter-spacing:-0.65px;">Nocalhost Console</span>
<svg style="left:780.2px;top:761.3px" width="14" height="14.6" viewBox="0 0 14 14.6" ><path d="M7 0.4 L13.6 3.8 L7 7.2 L0.4 3.8 Z" fill="#6e6e6e"/><path d="M0.8 7 L7 10.2 L13.2 7 M0.8 10.4 L7 13.6 L13.2 10.4" fill="none" stroke="#6e6e6e" stroke-width="1.5"/></svg>
<span class="t" style="left:801.0px;top:759.8px;font-size:14.6px;letter-spacing:-0.70px;transform-origin:0 50%;transform:scaleX(0.977);">Dependencies</span>
<svg style="left:910.8px;top:763px" width="9" height="11" viewBox="0 0 9 11" ><path d="M0 0 L9 5.5 L0 11 Z" fill="#6e6e6e"/></svg>
<span class="t" style="left:928.5px;top:759.8px;font-size:14.6px;letter-spacing:-0.70px;transform-origin:0 50%;transform:scaleX(0.932);">Run</span>
<svg style="left:973.6px;top:762px" width="14.8" height="13" viewBox="0 0 14.8 13" ><path d="M14.4 0 C15.4 6 13.6 12.4 6.6 12.4 C3 12.4 0.6 10.4 0.8 7.6 C1 3.6 6 3.4 9.6 3 C11.8 2.6 13.4 1.6 14.4 0 Z" fill="#6e6e6e"/><path d="M0.4 12.6 C3 9.4 6.2 7.6 10 6.8" fill="none" stroke="#f2f2f2" stroke-width="1"/></svg>
<span class="t" style="left:994.0px;top:759.8px;font-size:14.6px;letter-spacing:-0.70px;">Spring</span>
<svg style="left:1397px;top:761.4px" width="15" height="15" viewBox="0 0 15 15" ><circle cx="7.4" cy="7.4" r="7.3" fill="#59a869"/><text x="7.4" y="11.4" text-anchor="middle" font-family="Liberation Sans,sans-serif" font-size="10.8" font-weight="bold" fill="#fff">3</text></svg>
<span class="t" style="left:1417.0px;top:759.8px;font-size:14.6px;letter-spacing:-0.70px;transform-origin:0 50%;transform:scaleX(0.976);">Event Log</span>
<svg style="left:7px;top:786.4px" width="14.6" height="12.8" viewBox="0 0 14.6 12.8" ><rect x="3.4" y="0.6" width="10.6" height="9.4" fill="none" stroke="#7a7a7a" stroke-width="1.1"/><path d="M0.6 2.8 V12.2 H11.2" fill="none" stroke="#7a7a7a" stroke-width="1.1"/></svg>
<span class="t" style="left:32.5px;top:782.6px;font-size:15.0px;letter-spacing:0.02px;">Build completed successfully in 6 sec, 915 ms (moments ago)</span>
<svg style="left:942px;top:785px" width="19.4" height="17" viewBox="0 0 19.4 17" ><path d="M3.6 12.4 A3.5 3.5 0 0 1 3.4 5.6 A5 5 0 0 1 13 4.4 A4 4 0 0 1 14.6 12 Z" fill="#6e6e6e"/><text x="8.6" y="10.6" text-anchor="middle" font-family="Liberation Sans,sans-serif" font-size="9.5" font-weight="bold" fill="#f2f2f2">?</text></svg>
<svg style="left:952.8px;top:792.8px" width="8.4" height="8.4" viewBox="0 0 8.4 8.4" ><path d="M4.94 8.33 L3.46 8.33 L3.27 7.08 L2.18 6.45 L0.99 6.91 L0.25 5.62 L1.24 4.83 L1.24 3.57 L0.25 2.78 L0.99 1.49 L2.18 1.95 L3.27 1.32 L3.46 0.07 L4.94 0.07 L5.13 1.32 L6.22 1.95 L7.41 1.49 L8.15 2.78 L7.16 3.57 L7.16 4.83 L8.15 5.62 L7.41 6.91 L6.22 6.45 L5.13 7.08 Z" fill="#6e6e6e"/><circle cx="4.2" cy="4.2" r="1.51" fill="#f2f2f2"/></svg>
<svg style="left:971px;top:787px" width="18.6" height="12" viewBox="0 0 18.6 12" ><circle cx="3" cy="7.6" r="3" fill="#e25cf0"/><path d="M3 6 C5 0 8.6 0 10.4 4 C11.6 6.6 13 5.6 14 3.6 L18.6 5 C16.8 11.6 11.4 12.6 9 8.6 C7.8 6.6 6.6 7.6 5.6 9.4 Z" fill="#6a3df0"/><path d="M8.6 7 C10 11.6 14.6 11.6 17 6.4 L13.6 5 C12.6 7.4 10.6 7.6 8.6 7 Z" fill="#1ec8d8"/><rect x="13.6" y="0.4" width="4.6" height="4.6" fill="#2878f0" transform="rotate(14 15.9 2.7)"/></svg>
<span class="t" style="left:996.5px;top:782.6px;font-size:15.0px;letter-spacing:0.29px;">Waiting for enter DevMode</span>
<svg style="left:1194.5px;top:786px" width="19" height="15" viewBox="0 0 19 15" ><path d="M3.4 10.6 A4.6 4 0 0 1 5.6 3.4 A4.6 4.4 0 0 1 13.8 3.6 A4.2 4.4 0 0 1 14.8 11.6 C11 13.6 6 13 3.4 10.6 Z" fill="none" stroke="#111" stroke-width="1.7"/><path d="M0.8 2.6 L18 13.8" stroke="#111" stroke-width="1.9"/></svg>
<span class="t" style="left:1229.0px;top:782.6px;font-size:15.0px;letter-spacing:-0.31px;">25:33</span>
<span class="t" style="left:1280.5px;top:782.6px;font-size:15.0px;letter-spacing:-0.70px;transform-origin:0 50%;transform:scaleX(0.907);">CRLF</span>
<span class="t" style="left:1329.5px;top:782.6px;font-size:15.0px;letter-spacing:-0.40px;">UTF-8</span>
<span class="t" style="left:1384.5px;top:782.6px;font-size:15.0px;letter-spacing:-0.44px;">4 spaces</span>
<svg style="left:1456px;top:785.5px" width="14" height="14" viewBox="0 0 14 14" ><rect x="3.6" y="7" width="9.6" height="6.6" fill="#6e6e6e"/><path d="M1 7.4 V4 A2.8 2.8 0 0 1 6.6 4 V7" fill="none" stroke="#6e6e6e" stroke-width="1.5"/></svg>
<svg style="left:1484.5px;top:785.2px" width="15" height="15" viewBox="0 0 15 15" ><circle cx="7.5" cy="7.5" r="7.4" fill="#e0514f"/><rect x="6.4" y="3.2" width="2.2" height="5.6" fill="#fff"/><rect x="6.4" y="10" width="2.2" height="2.2" fill="#fff"/></svg>
<span class="t cjks" style="left:1329.5px;top:768.4px;font-size:17.8px;color:rgba(255,255,255,0.86);letter-spacing:0.11px;font-weight:300;text-shadow:1px 1px 0.6px rgba(95,95,95,0.78),0 0 1px rgba(120,120,120,.55);">@稀土掘金技术社区</span>
<div class="abs" style="left:1506px;top:804px;width:1px;height:8px;background:#7d8287"></div>
<div class="abs" style="left:418px;top:804px;width:50px;height:8px;background:#25476a"></div>
<div class="abs" style="left:1366px;top:809.6px;width:66px;height:2.4px;background:repeating-linear-gradient(90deg,#e8e8e8 0 5px,#10151c 5px 9px);opacity:.85"></div>
<div class="abs" id="rightstrip"></div>
<span class="t" style="left:1492.6px;top:74.6px;font-size:19px;color:#6a6a6a;font-weight:bold;font-style:italic;letter-spacing:-0.70px;transform-origin:0 50%;transform:scaleX(0.926);">m</span>
<span class="t" style="left:1509.5px;top:100.8px;font-size:14.2px;letter-spacing:-0.70px;transform-origin:0 0;transform:rotate(90deg) scaleX(0.998);">Maven</span>
<svg style="left:1494px;top:165.6px" width="13.6" height="14.6" viewBox="0 0 13.6 14.6" ><path d="M0 2.6 A6.8 2.6 0 0 1 13.6 2.6 V12 A6.8 2.6 0 0 1 0 12 Z" fill="#6e6e6e"/><path d="M0 5.6 A6.8 2.6 0 0 0 13.6 5.6 M0 9 A6.8 2.6 0 0 0 13.6 9" stroke="#f2f2f2" stroke-width="1.1" fill="none"/></svg>
<span class="t" style="left:1509.5px;top:187.0px;font-size:14.2px;letter-spacing:-0.09px;transform-origin:0 0;transform:rotate(90deg);">Database</span>
<svg style="left:1494px;top:266px" width="13" height="14" viewBox="0 0 13 14" ><path d="M9 0 C12 1 13 3.6 11 6 C9.6 7.6 7 8.6 8.6 10.2 L12.4 11.6 L11.4 14 L6.8 14 C3 13 2.2 10 4.4 8 C6 6.6 7.4 5.6 6 4.4 C4.4 3.4 2.6 1.6 6 0 Z" fill="#6e6e6e"/></svg>
<span class="t" style="left:1509.5px;top:284.0px;font-size:14.2px;letter-spacing:-0.12px;transform-origin:0 0;transform:rotate(90deg);">Nocalhost</span>
<svg style="left:1494px;top:370.6px" width="13" height="14.4" viewBox="0 0 13 14.4" ><rect x="1.6" y="0.6" width="10.4" height="13.6" fill="#c6e2ec"/><path d="M1 1.6 H5 M6.6 1.6 H12 M1 4.4 H4 M5.6 4.4 H10 M1 7.2 H6 M7.6 7.2 H12 M1 10 H4.6 M6 10 H11 M1 12.8 H5.6 M7.2 12.8 H12" stroke="#7fb5c9" stroke-width="1.3"/></svg>
<span class="t" style="left:1509.5px;top:389.4px;font-size:14.2px;letter-spacing:-0.34px;transform-origin:0 0;transform:rotate(90deg);">jclasslib</span>
<svg style="left:1494px;top:575.6px" width="14" height="16.6" viewBox="0 0 14 16.6" ><rect x="0" y="0" width="6" height="6" fill="#6e6e6e"/><rect x="8.6" y="5.4" width="5.4" height="5.4" fill="#6e6e6e" transform="rotate(45 11.3 8.1)"/><circle cx="4" cy="13.2" r="3.2" fill="#6e6e6e"/><path d="M3 6 V10 M6 3 H11 V5" fill="none" stroke="#6e6e6e" stroke-width="1.2"/></svg>
<span class="t" style="left:1509.5px;top:597.6px;font-size:14.2px;letter-spacing:-0.24px;transform-origin:0 0;transform:rotate(90deg);">BPMN-Activiti-Diagram</span>
<div class="abs" style="left:1326px;top:219px;width:184.5px;height:30px;background:#fff;border:1px solid #c9d6e8;border-radius:3px;box-shadow:0 0 2px rgba(120,150,200,.35)"></div>
<svg style="left:1300px;top:213px" width="39" height="38" viewBox="0 0 39 38" ><defs><linearGradient id="sg" x1="0" y1="0" x2="1" y2="1"><stop offset="0" stop-color="#f5702a"/><stop offset="1" stop-color="#ee4318"/></linearGradient></defs><g transform="rotate(-11 19.5 19)"><rect x="4" y="3.6" width="31" height="31" rx="3.4" fill="url(#sg)"/><text x="19.5" y="31" text-anchor="middle" font-family="Liberation Sans,sans-serif" font-size="33" font-weight="bold" font-style="italic" fill="#fff" transform="translate(19.5 19) scale(1.38 0.9) translate(-20.6 -19)">S</text></g></svg>
<span class="t cjks" style="left:1345.6px;top:223.4px;font-size:17.4px;color:#0c6ad9;font-weight:bold;letter-spacing:-0.01px;">中</span>
<svg style="left:1376.4px;top:229px" width="15" height="13" viewBox="0 0 15 13" ><circle cx="2.6" cy="3" r="1.9" fill="none" stroke="#0c6ad9" stroke-width="1.4"/><path d="M9 6 H12.4 V9 C12.4 11 11 12.4 9.2 12.8 V11.4 C10.2 11 10.6 10.2 10.6 9.4 H9 Z" fill="#0c6ad9"/></svg>
<svg style="left:1404px;top:225.4px" width="14" height="18" viewBox="0 0 14 18" ><rect x="4" y="0" width="6" height="10.6" rx="3" fill="#0c6ad9"/><path d="M1 7 V7.6 A6 6 0 0 0 13 7.6 V7" fill="none" stroke="#0c6ad9" stroke-width="1.6"/><path d="M7 13.6 V16.4 M4.4 17 H9.6" stroke="#0c6ad9" stroke-width="1.5"/></svg>
<svg style="left:1430.8px;top:227.2px" width="17.6" height="13.8" viewBox="0 0 17.6 13.8" ><rect x="0" y="0" width="17.6" height="13.8" rx="1.8" fill="#0c6ad9"/><path d="M2.4 3.2 H4.4 M6 3.2 H8 M9.6 3.2 H11.6 M13.2 3.2 H15.2 M2.4 6.6 H4.4 M6 6.6 H8 M9.6 6.6 H11.6 M13.2 6.6 H15.2 M4 10.2 H13.6" stroke="#fff" stroke-width="1.7"/></svg>
<svg style="left:1459px;top:226.6px" width="18.6" height="15.4" viewBox="0 0 18.6 15.4" ><path d="M5.6 0 C7 2.2 11.6 2.2 13 0 L18.6 3 L16.6 7.6 L14.4 6.6 V15.4 H4.2 V6.6 L2 7.6 L0 3 Z" fill="#0c6ad9"/></svg>
<svg style="left:1488.6px;top:227.6px" width="15.8" height="15" viewBox="0 0 15.8 15" ><rect x="0" y="0" width="6.8" height="6.4" rx="1.6" fill="#0c6ad9"/><circle cx="12.2" cy="3.2" r="3.3" fill="#0c6ad9"/><rect x="0" y="8.4" width="6.8" height="6.4" rx="1.6" fill="#0c6ad9"/><rect x="9" y="8.4" width="6.8" height="6.4" rx="1.6" fill="#0c6ad9"/></svg>
<div class="abs" style="left:1500.6px;top:244px;width:9.4px;height:67px;border-radius:4.5px;background:linear-gradient(180deg,#6a6a6a 0,#5c5c5c 29%,#2f7a3c 32%,#2f8f44 100%)"></div>
<div class="abs" style="left:1502px;top:265px;width:6.6px;height:44px;background:repeating-linear-gradient(90deg,#4fb862 0 1px,#1d6a2e 1px 2.2px);opacity:.85"></div>
</body>
</html>
